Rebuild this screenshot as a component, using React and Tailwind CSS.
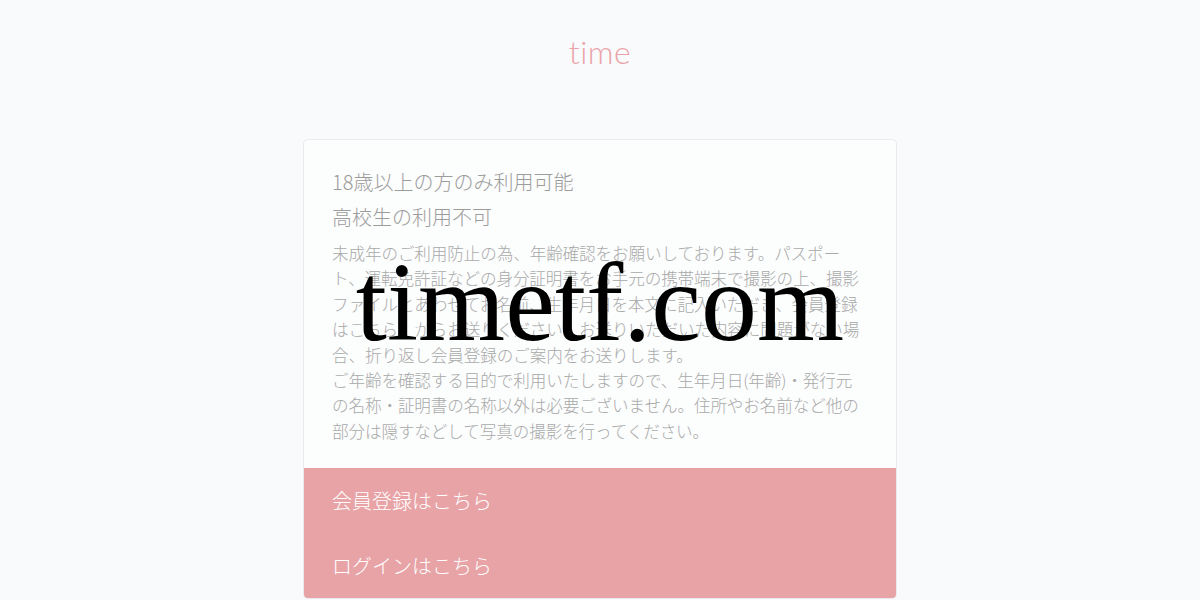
import React from 'react';

const jp = { fontFamily: '"Noto Sans CJK JP", "Noto Sans", sans-serif' };

export default function App() {
  return (
    <div className="relative min-h-[600px] w-full bg-[#f9fafc] overflow-hidden">
      {/* Header logo */}
      <header className="h-[139px] flex justify-center">
        <h1
          className="pt-[30px] text-[32px] leading-[44px] font-light text-[#eaa3a8] tracking-[0.5px]"
          style={{ fontFamily: 'Lato, "Noto Sans", sans-serif' }}
        >
          time
        </h1>
      </header>

      {/* Age notice card */}
      <main className="flex justify-center">
        <div className="w-[594px] rounded-[5px] border border-[#e9ebee] bg-[#fcfdfd] overflow-hidden font-light" style={jp}>
          <div className="px-[28px] pt-[27px] pb-[24px]">
            <h2 className="text-[20px] leading-[30px] font-light text-[#9c9c9c]">18歳以上の方のみ利用可能</h2>
            <h3 className="mt-[5px] text-[20px] leading-[30px] font-light text-[#9c9c9c]">高校生の利用不可</h3>
            <p className="mt-[9px] text-[16.6px] leading-[25.4px] tracking-[-0.12px] text-[#a9a9a9]">
              未成年のご利用防止の為、年齢確認をお願いしております。パスポート、運転免許証などの身分証明書をお手元の携帯端末で撮影の上、撮影ファイルとあわせてお名前、生年月日を本文に記入いただき、会員登録はこちら】からお送りください。お送りいただいた内容に問題がない場合、折り返し会員登録のご案内をお送りします。
              <br />
              ご年齢を確認する目的で利用いたしますので、生年月日(年齢)・発行元の名称・証明書の名称以外は必要ございません。住所やお名前など他の部分は隠すなどして写真の撮影を行ってください。
            </p>
          </div>

          {/* Action links */}
          <div className="bg-[#e8a3a6]">
            <a className="flex h-[65px] items-center px-[28px] text-[20px] text-white">会員登録はこちら</a>
            <a className="flex h-[65px] items-center px-[28px] text-[20px] text-white">ログインはこちら</a>
          </div>
        </div>
      </main>

      {/* Site watermark */}
      <div
        className="absolute left-0 right-0 top-[246px] text-center text-[112px] leading-none text-black pointer-events-none"
        style={{ fontFamily: '"Liberation Serif", serif' }}
      >
        timetf.com
      </div>
    </div>
  );
}
